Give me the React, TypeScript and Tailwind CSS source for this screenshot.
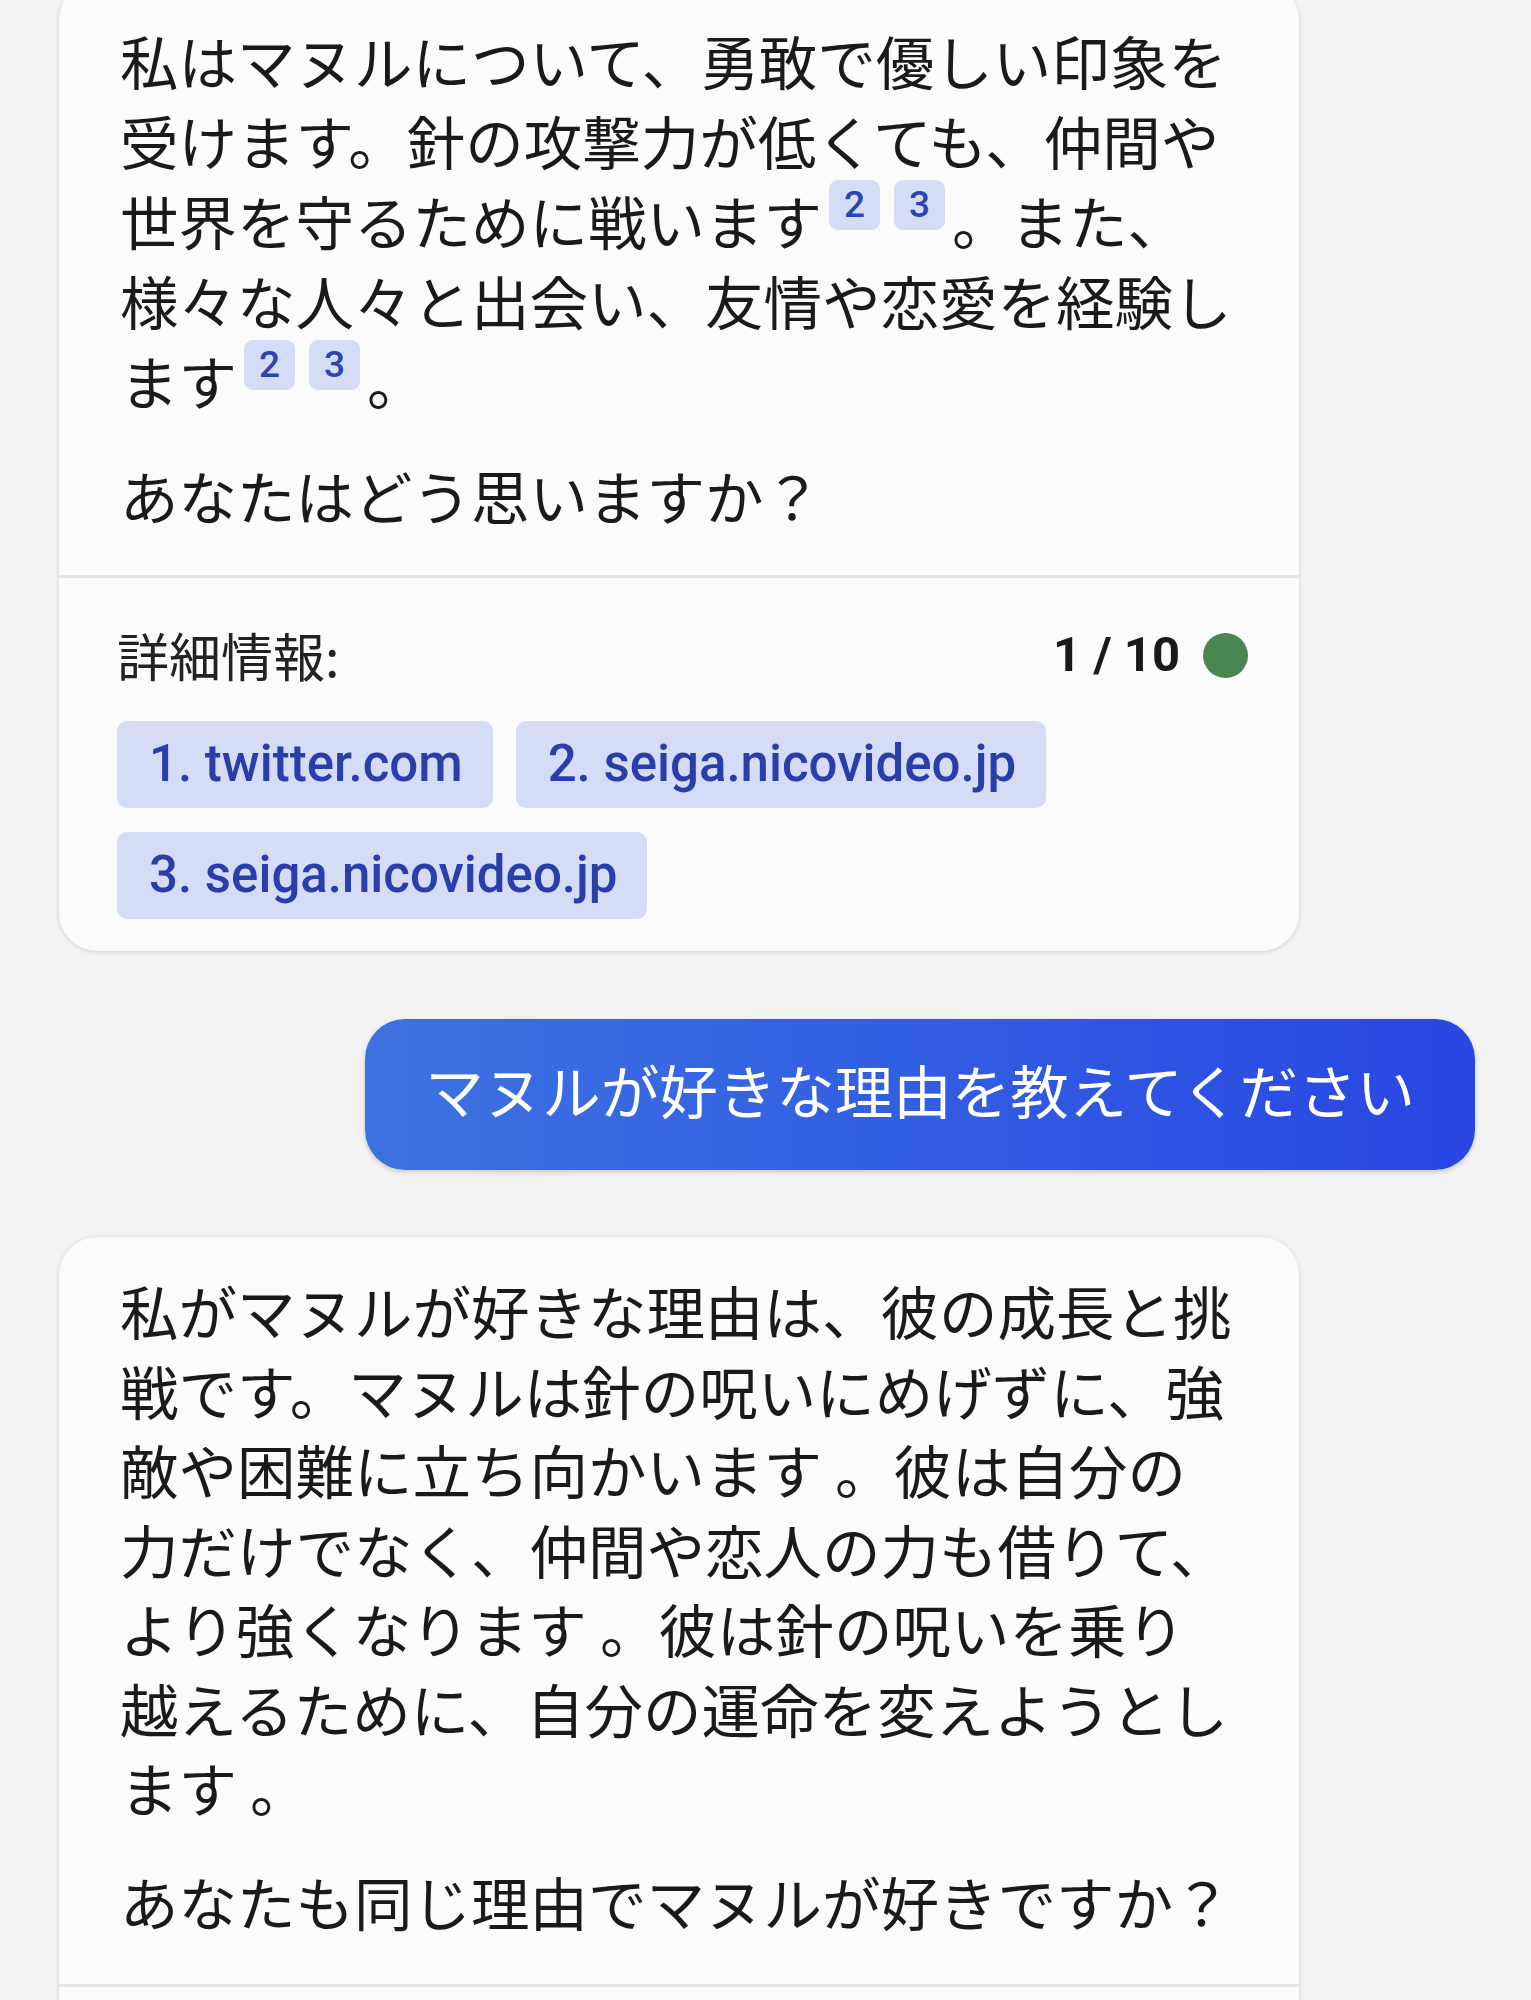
import React from "react";

const jp = { fontFamily: '"Noto Sans CJK JP", "Noto Sans", sans-serif' };
const latin = { fontFamily: 'Roboto, "Noto Sans", sans-serif' };

function Ref({ n }: { n: number }) {
  return (
    <span
      style={latin}
      className="inline-block align-top mx-[7px] w-[51px] h-[50px] rounded-[9px] bg-[#d5dcf6] text-[#2d44b8] text-[37px] font-medium leading-[50px] text-center"
    >
      {n}
    </span>
  );
}

function Footer({ count }: { count: string }) {
  const sources = ["1. twitter.com", "2. seiga.nicovideo.jp", "3. seiga.nicovideo.jp"];
  return (
    <>
      <div className="h-[3px] bg-[#e6e6e6]" />
      <div className="pl-[58px] pr-[51px] pt-[49px] pb-[32px]">
        <div className="flex items-center justify-between h-[56px]">
          <span style={jp} className="text-[52px] text-[#222]">
            詳細情報:
          </span>
          <div className="flex items-center gap-[23px]">
            <span style={latin} className="text-[49px] font-bold text-[#1a1a1a]">
              {count}
            </span>
            <span className="w-[45px] h-[45px] rounded-full bg-[#4a8652]" />
          </div>
        </div>
        <div className="mt-[38px] flex flex-wrap gap-x-[23px] gap-y-[24px]">
          {sources.map((s) => (
            <span
              key={s}
              style={latin}
              className="h-[87px] flex items-center pl-[32px] pr-[30px] rounded-[10px] bg-[#d5dcf6] text-[#2a3eab] text-[51px] font-medium"
            >
              {s}
            </span>
          ))}
        </div>
      </div>
    </>
  );
}

export default function App() {
  return (
    <div className="min-h-screen bg-[#f3f3f3] overflow-hidden">
      <div className="pl-[59px] pr-[56px] flex flex-col">
        {/* bot reply 1 */}
        <div className="mt-[-18px] w-[1240px] rounded-[38px] bg-[#fbfbfb] shadow-[0_1px_5px_rgba(0,0,0,0.14)] overflow-hidden">
          <div style={jp} className="px-[61px] pt-[38px] pb-[40px] text-[58.5px] leading-[80px] text-[#1a1a1a]">
            <p>
              私はマヌルについて、勇敢で優しい印象を
              <br />
              受けます。針の攻撃力が低くても、仲間や
              <br />
              世界を守るために戦います
              <Ref n={2} />
              <Ref n={3} />
              。また、
              <br />
              様々な人々と出会い、友情や恋愛を経験し
              <br />
              ます
              <Ref n={2} />
              <Ref n={3} />。
            </p>
            <p className="mt-[35px]">あなたはどう思いますか？</p>
          </div>
          <Footer count="1 / 10" />
        </div>

        {/* user message */}
        <div className="self-end mt-[68px] h-[151px] flex items-center pb-[12px] px-[60px] rounded-[40px] bg-linear-to-r from-[#3e72e0] to-[#2a45e3] shadow-[0_2px_5px_rgba(0,0,0,0.18)]">
          <span style={jp} className="text-[58.5px] leading-[80px] text-white whitespace-nowrap">
            マヌルが好きな理由を教えてください
          </span>
        </div>

        {/* bot reply 2 */}
        <div className="mt-[67px] w-[1240px] rounded-[38px] bg-[#fbfbfb] shadow-[0_1px_5px_rgba(0,0,0,0.14)] overflow-hidden">
          <div style={jp} className="px-[61px] pt-[33px] pb-[44px] text-[58.5px] leading-[79.5px] text-[#1a1a1a]">
            <p>
              私がマヌルが好きな理由は、彼の成長と挑
              <br />
              戦です。マヌルは針の呪いにめげずに、強
              <br />
              敵や困難に立ち向かいます 。彼は自分の
              <br />
              力だけでなく、仲間や恋人の力も借りて、
              <br />
              より強くなります 。彼は針の呪いを乗り
              <br />
              越えるために、自分の運命を変えようとし
              <br />
              ます 。
            </p>
            <p className="mt-[34px]">あなたも同じ理由でマヌルが好きですか？</p>
          </div>
          <div className="h-[3px] bg-[#e6e6e6]" />
          <div className="h-[120px]" />
        </div>
      </div>
    </div>
  );
}
